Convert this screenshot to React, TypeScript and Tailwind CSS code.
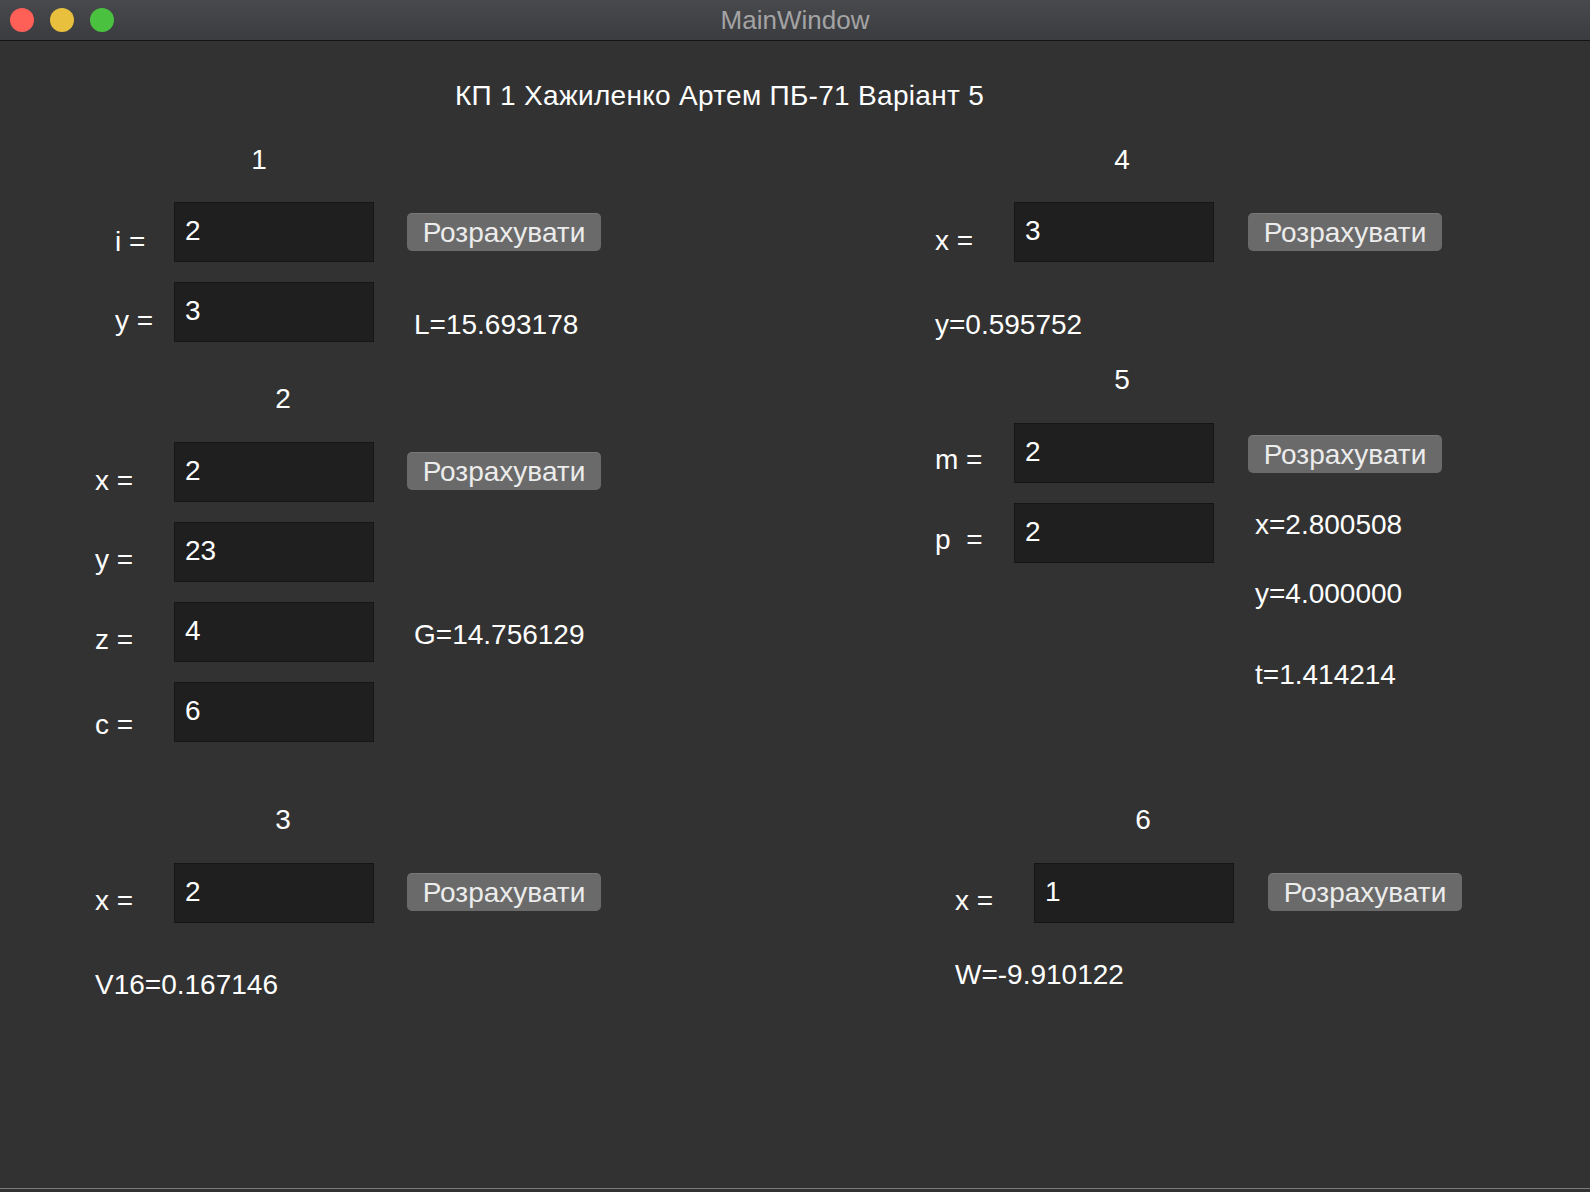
import React from 'react';

const Header = ({ children, className }: { children: React.ReactNode; className: string }) => (
	<div className={`w-[100px] h-8 leading-8 text-center ${className}`}>{children}</div>
);

const Field = ({ value }: { value: string }) => (
	<div className="w-[200px] h-[60px] shrink-0 bg-[#1f1f1f] border border-[#161616] pl-[10px] pt-[12px] leading-8 text-white">
		{value}
	</div>
);

const CalcButton = ({ className }: { className: string }) => (
	<button
		type="button"
		className={`w-[194px] h-[38px] shrink-0 rounded-[5px] bg-[#6a6a6a] border-t border-[#777777] text-[#ececec] leading-8 flex items-center justify-center ${className}`}
	>
		Розрахувати
	</button>
);

const Text = ({ children, className }: { children: React.ReactNode; className: string }) => (
	<div className={`h-8 leading-8 whitespace-pre ${className}`}>{children}</div>
);

const App = () => {
	return (
		<div className="w-[1590px] h-[1192px] flex flex-col bg-[#323232] text-white text-[28px] font-['Liberation_Sans',Arial,sans-serif] overflow-hidden">
			{/* title bar */}
			<div className="relative h-[41px] shrink-0 flex items-center bg-gradient-to-b from-[#48494d] to-[#3b3c40] border-b border-[#141414]">
				<div className="flex items-center gap-4 pl-[10px]">
					<span className="w-6 h-6 rounded-full bg-[#fe5f57]" />
					<span className="w-6 h-6 rounded-full bg-[#e8c03d]" />
					<span className="w-6 h-6 rounded-full bg-[#4ac23f]" />
				</div>
				<div className="absolute inset-0 flex items-center justify-center text-[26px] text-[#a3a3a3] pointer-events-none">
					MainWindow
				</div>
			</div>

			<div className="flex-1 flex flex-col">
				<Text className="mt-[39px] pl-[455px] tracking-[0.3px]">КП 1 Хажиленко Артем ПБ-71 Варіант 5</Text>

				<div className="flex">
					{/* left column */}
					<div className="w-[935px] shrink-0 pl-[95px] flex flex-col">
						<Header className="mt-[32px] ml-[114px]">1</Header>
						<div className="mt-[26px] flex items-start">
							<Text className="w-[79px] pl-[20px] mt-[24px]">i =</Text>
							<Field value="2" />
							<CalcButton className="ml-[33px] mt-[11px]" />
						</div>
						<div className="mt-[20px] flex items-start">
							<Text className="w-[79px] pl-[20px] mt-[23px]">y =</Text>
							<Field value="3" />
							<Text className="ml-[40px] mt-[27px]">L=15.693178</Text>
						</div>

						<Header className="mt-[41px] ml-[138px]">2</Header>
						<div className="mt-[27px] flex items-start">
							<Text className="w-[79px] mt-[23px]">x =</Text>
							<Field value="2" />
							<CalcButton className="ml-[33px] mt-[10px]" />
						</div>
						<div className="mt-[20px] flex items-start">
							<Text className="w-[79px] mt-[22px]">y =</Text>
							<Field value="23" />
						</div>
						<div className="mt-[20px] flex items-start">
							<Text className="w-[79px] mt-[22px]">z =</Text>
							<Field value="4" />
							<Text className="ml-[40px] mt-[17px]">G=14.756129</Text>
						</div>
						<div className="mt-[20px] flex items-start">
							<Text className="w-[79px] mt-[27px]">c =</Text>
							<Field value="6" />
						</div>

						<Header className="mt-[62px] ml-[138px]">3</Header>
						<div className="mt-[27px] flex items-start">
							<Text className="w-[79px] mt-[22px]">x =</Text>
							<Field value="2" />
							<CalcButton className="ml-[33px] mt-[10px]" />
						</div>
						<Text className="mt-[46px]">V16=0.167146</Text>
					</div>

					{/* right column */}
					<div className="flex-1 flex flex-col">
						<Header className="mt-[32px] ml-[137px]">4</Header>
						<div className="mt-[26px] flex items-start">
							<Text className="w-[79px] mt-[23px]">x =</Text>
							<Field value="3" />
							<CalcButton className="ml-[34px] mt-[11px]" />
						</div>
						<Text className="mt-[47px]">y=0.595752</Text>

						<Header className="mt-[23px] ml-[137px]">5</Header>
						<div className="mt-[27px] flex items-start">
							<Text className="w-[79px] mt-[21px]">m =</Text>
							<Field value="2" />
							<CalcButton className="ml-[34px] mt-[12px]" />
						</div>
						<div className="mt-[20px] flex items-start">
							<Text className="w-[79px] mt-[21px]">p  =</Text>
							<Field value="2" />
							<Text className="ml-[41px] mt-[6px]">x=2.800508</Text>
						</div>
						<Text className="mt-[15px] ml-[320px]">y=4.000000</Text>
						<Text className="mt-[49px] ml-[320px]">t=1.414214</Text>

						<Header className="mt-[113px] ml-[158px]">6</Header>
						<div className="mt-[27px] flex items-start">
							<Text className="w-[99px] pl-[20px] mt-[22px]">x =</Text>
							<Field value="1" />
							<CalcButton className="ml-[34px] mt-[10px]" />
						</div>
						<Text className="mt-[36px] ml-[20px]">W=-9.910122</Text>
					</div>
				</div>
			</div>

			{/* bottom edge */}
			<div className="h-px shrink-0 bg-[#7c7c7c]" />
			<div className="h-[3px] shrink-0" />
		</div>
	);
};

export default App;
